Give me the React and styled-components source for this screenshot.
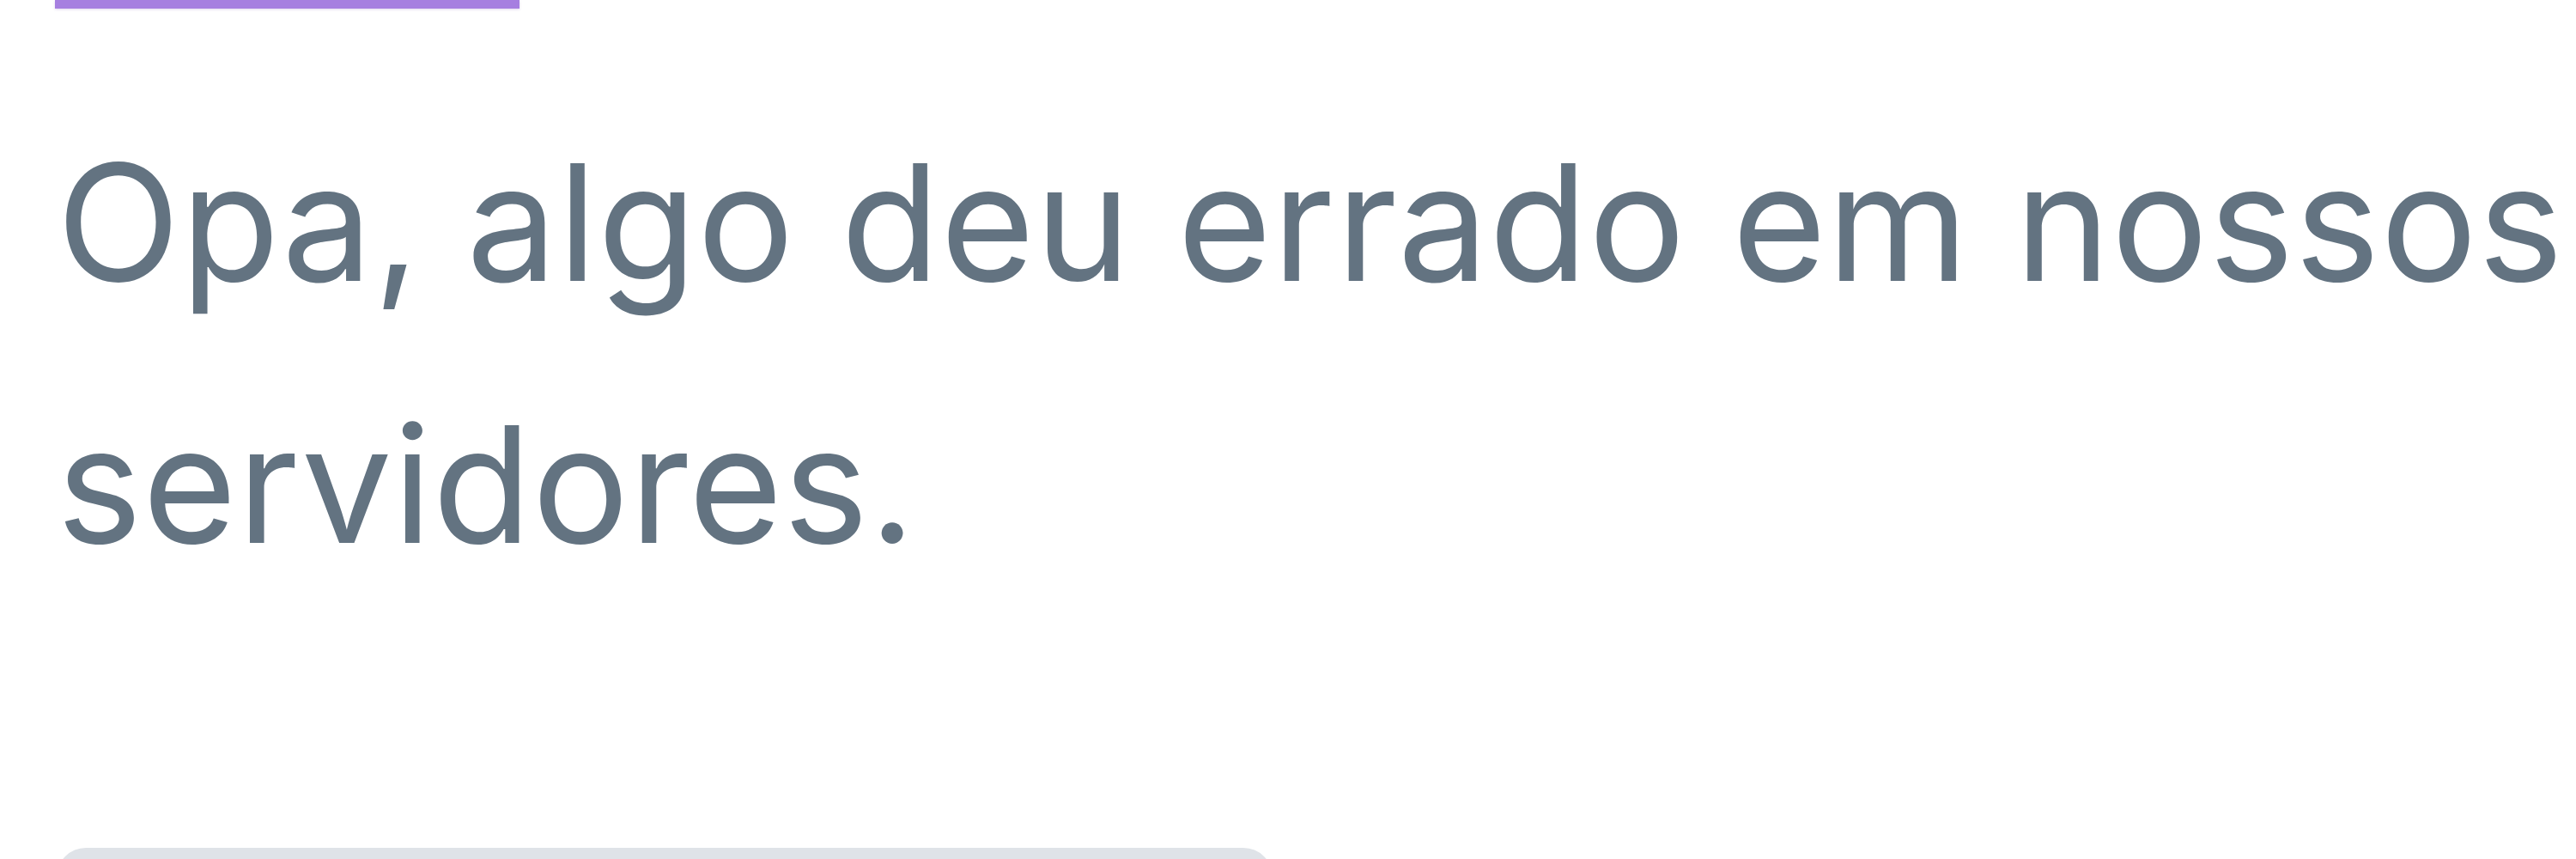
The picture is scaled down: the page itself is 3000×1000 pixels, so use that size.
import React from 'react';
import styled, { createGlobalStyle } from 'styled-components';

const GlobalStyle = createGlobalStyle`
    html, body {
        margin: 0;
        padding: 0;
        background: #ffffff;
    }
    body {
        font-family: Inter, "Noto Sans", sans-serif;
        overflow: hidden;
    }
`;

const Page = styled.div`
    width: 3000px;
    height: 1000px;
    box-sizing: border-box;
    padding: 0 0 0 66px;
    display: flex;
    flex-direction: column;
    overflow: hidden;
`;

const TabLine = styled.div`
    width: 541px;
    height: 10px;
    margin-left: -2px;
    background: #a67fe0;
    box-shadow: 0 1px 3px rgba(120, 80, 180, 0.25);
    flex-shrink: 0;
`;

const Message = styled.h1`
    margin: 96px 0 0 0;
    font-family: Inter, "Noto Sans", sans-serif;
    font-weight: 400;
    font-size: 188px;
    line-height: 305px;
    letter-spacing: 0.8px;
    color: #637381;
`;

const Line = styled.span`
    display: block;
    white-space: nowrap;
`;

const RetryButton = styled.button`
    margin-top: 271px;
    width: 1416px;
    height: 90px;
    flex-shrink: 0;
    border: none;
    border-radius: 34px;
    background: #dfe3e8;
`;

export default function App() {
    return (
        <>
            <GlobalStyle />
            <Page>
                <TabLine />
                <Message>
                    <Line>Opa, algo deu errado em nossos</Line>
                    <Line>servidores.</Line>
                </Message>
                <RetryButton />
            </Page>
        </>
    );
}
